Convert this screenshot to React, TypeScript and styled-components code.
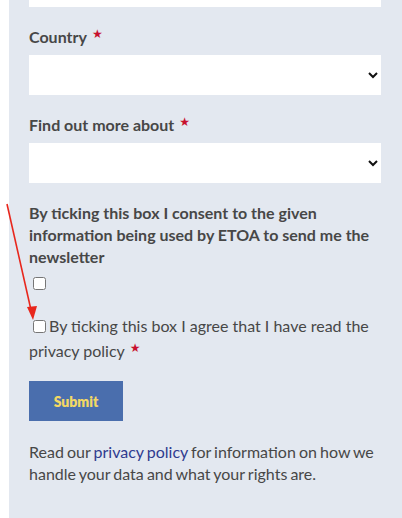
import styled, { createGlobalStyle } from 'styled-components';

const GlobalStyle = createGlobalStyle`
  html, body {
    margin: 0;
    padding: 0;
    background: #ffffff;
    overflow: hidden;
  }
  body {
    font-family: Lato, "Open Sans", Arial, sans-serif;
  }
`;

const Page = styled.div`
  position: relative;
  width: 402px;
  height: 518px;
  overflow: hidden;
`;

const Panel = styled.div`
  display: flow-root;
  margin-left: 9px;
  height: 100%;
  background: #e3e8f0;
  padding: 0 21px 0 20px;
  box-sizing: border-box;
`;

const Form = styled.form`
  display: flex;
  flex-direction: column;
  margin-top: -33px;
  color: #474747;
`;

const TextInput = styled.input`
  display: block;
  width: 100%;
  height: 40px;
  box-sizing: border-box;
  border: none;
  background: #ffffff;
  margin: 0;
`;

const Label = styled.label`
  display: block;
  font-size: 16px;
  line-height: 24px;
  font-weight: 700;
  margin: 15px 0 6px;
`;

const Required = styled.span`
  color: #c8102e;
  font-size: 12px;
  vertical-align: 5px;
  margin-left: 5px;
  font-family: "DejaVu Sans", sans-serif;
`;

const Select = styled.select`
  display: block;
  width: 100%;
  height: 40px;
  box-sizing: border-box;
  border: none;
  border-radius: 0;
  background: #ffffff;
  color: #111;
  font-size: 15px;
  padding: 0 8px;
`;

const Consent = styled.p`
  margin: 19px 0 0;
  font-size: 16px;
  line-height: 22px;
  font-weight: 700;
`;

const BoxRow = styled.div`
  margin-top: 6px;
  input {
    display: block;
  }
`;

const Agree = styled.label`
  display: block;
  margin-top: 22px;
  font-size: 16px;
  line-height: 22px;
  input {
    margin: 3px 3px 0 4px;
    vertical-align: -1px;
  }
`;

const SubmitButton = styled.button`
  align-self: flex-start;
  margin-top: 19px;
  width: 94px;
  height: 40px;
  border: none;
  background: #4a6ead;
  color: #f3d865;
  font-family: Lato, Arial, sans-serif;
  font-weight: 800;
  font-size: 14px;
  cursor: pointer;
`;

const Note = styled.p`
  margin: 20px 0 0;
  font-size: 16px;
  line-height: 22px;
  word-spacing: -1px;

  a {
    color: #2f3b8f;
    text-decoration: none;
  }
`;

const Arrow = styled.svg`
  position: absolute;
  left: 0;
  top: 0;
  pointer-events: none;
`;

export default function App() {
  return (
    <Page>
      <GlobalStyle />
      <Panel>
        <Form onSubmit={(e) => e.preventDefault()}>
          <TextInput type="text" />

          <Label>
            Country<Required>★</Required>
          </Label>
          <Select defaultValue="">
            <option value=""></option>
          </Select>

          <Label>
            Find out more about<Required>★</Required>
          </Label>
          <Select defaultValue="">
            <option value=""></option>
          </Select>

          <Consent>
            By ticking this box I consent to the given information being used by ETOA to send me the newsletter
          </Consent>
          <BoxRow>
            <input type="checkbox" />
          </BoxRow>

          <Agree>
            <input type="checkbox" />By ticking this box I agree that I have read the privacy policy
            <Required>★</Required>
          </Agree>

          <SubmitButton type="submit">Submit</SubmitButton>

          <Note>
            Read our <a href="#">privacy policy</a> for information on how we handle your data and what your rights are.
          </Note>
        </Form>
      </Panel>

      <Arrow width="402" height="518" viewBox="0 0 402 518">
        <line x1="7" y1="204" x2="31" y2="310" stroke="#e8261c" strokeWidth="1.6" />
        <polygon points="33,320 27,307 37,306" fill="#e8261c" />
      </Arrow>
    </Page>
  );
}
